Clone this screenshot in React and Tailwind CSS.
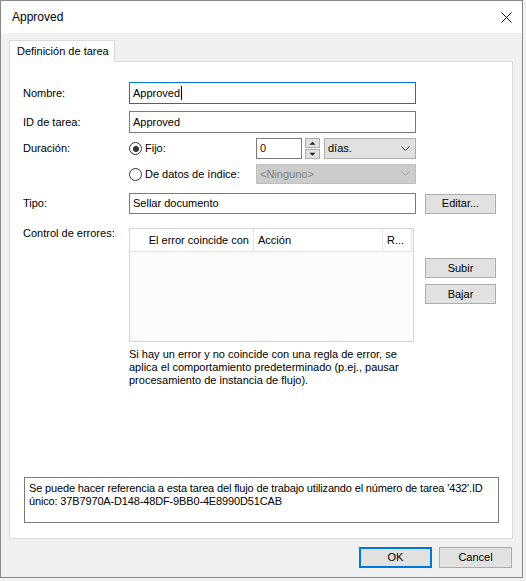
import React from 'react';

const font = { fontFamily: '"Liberation Sans", Arial, sans-serif' };

function Chevron({ color = '#404040' }) {
  return (
    <svg width="9" height="6" viewBox="0 0 9 6" className="shrink-0">
      <path d="M0.5 0.5 L4.5 4.5 L8.5 0.5" fill="none" stroke={color} strokeWidth="1" />
    </svg>
  );
}

function Radio({ checked }) {
  return (
    <span className="relative inline-block w-[13px] h-[13px] rounded-full border border-[#333] bg-white shrink-0">
      {checked && <span className="absolute left-[2.5px] top-[2.5px] w-[6px] h-[6px] rounded-full bg-[#333]" />}
    </span>
  );
}

function Spinner() {
  return (
    <div className="flex flex-col w-[15px] h-[21px] gap-[1px]">
      {['M4 6 L7.5 2.5 L11 6 Z', 'M4 2.5 L7.5 6 L11 2.5 Z'].map((d) => (
        <div key={d} className="flex-1 bg-[#e1e1e1] border border-[#adadad] flex items-center justify-center">
          <svg width="15" height="8" viewBox="0 0 15 8">
            <path d={d} fill="#222" />
          </svg>
        </div>
      ))}
    </div>
  );
}

function Button({ children, primary, className = '' }) {
  return (
    <div
      className={`flex items-center justify-center bg-[#e1e1e1] text-[11px] text-black ${
        primary ? 'border-2 border-[#0078d7]' : 'border border-[#adadad]'
      } ${className}`}
    >
      {children}
    </div>
  );
}

export default function App() {
  return (
    <div className="w-[526px] h-[581px] bg-[#f3f3f3]" style={font}>
      <div className="w-[523px] h-[578px] border border-[#888] bg-[#f0f0f0] flex flex-col text-[11px] text-black">
        {/* title bar */}
        <div className="h-[32px] bg-white flex items-center justify-between pl-[11px] pr-[10px]">
          <span className="text-[12px]">Approved</span>
          <svg width="11" height="11" viewBox="0 0 11 11">
            <path d="M0.5 0.5 L10.5 10.5 M10.5 0.5 L0.5 10.5" stroke="#111" strokeWidth="1" />
          </svg>
        </div>

        <div className="pl-[8px] pt-[7px]">
          {/* tab strip */}
          <div className="flex">
            <div className="relative z-10 h-[22px] w-[106px] -mb-[1px] bg-white border border-b-0 border-[#d9d9d9] flex items-center pl-[7px]">
              Definición de tarea
            </div>
          </div>

          {/* tab panel */}
          <div className="w-[504px] h-[478px] bg-white border border-[#d9d9d9] flex flex-col pl-[13px]">
            <div className="flex items-center mt-[20px] h-[22px]">
              <span className="w-[106px]">Nombre:</span>
              <div className="w-[287px] h-[22px] border border-[#0078d7] flex items-center pl-[3px]">
                Approved
                <span className="w-[1px] h-[14px] bg-black ml-[1px]" />
              </div>
            </div>

            <div className="flex items-center mt-[7px] h-[22px]">
              <span className="w-[106px]">ID de tarea:</span>
              <div className="w-[287px] h-[22px] border border-[#7a7a7a] flex items-center pl-[3px]">Approved</div>
            </div>

            <div className="flex items-center mt-[5px] h-[21px]">
              <span className="w-[106px]">Duración:</span>
              <label className="w-[127px] flex items-center gap-[3px]">
                <Radio checked />
                Fijo:
              </label>
              <div className="w-[46px] h-[21px] border border-[#7a7a7a] flex items-center pl-[3px] text-[#400]">0</div>
              <div className="ml-[3px]">
                <Spinner />
              </div>
              <div className="ml-[4px] w-[92px] h-[21px] bg-[#e1e1e1] border border-[#adadad] flex items-center justify-between pl-[3px] pr-[5px]">
                días.
                <Chevron />
              </div>
            </div>

            <div className="flex items-center mt-[5px] h-[20px]">
              <span className="w-[106px]" />
              <label className="w-[127px] flex items-center gap-[3px]">
                <Radio />
                De datos de índice:
              </label>
              <div className="w-[160px] h-[20px] bg-[#cccccc] border border-[#bfbfbf] flex items-center justify-between pl-[3px] pr-[5px] text-[#838383]">
                &lt;Ninguno&gt;
                <Chevron color="#a8a8a8" />
              </div>
            </div>

            <div className="flex items-center mt-[9px] h-[21px]">
              <span className="w-[106px]">Tipo:</span>
              <div className="w-[287px] h-[21px] border border-[#7a7a7a] flex items-center pl-[3px]">Sellar documento</div>
              <Button className="ml-[9px] w-[71px] h-[20px]">Editar...</Button>
            </div>

            <div className="flex mt-[14px]">
              <span className="w-[106px] -mt-[1px] leading-[13px]">Control de errores:</span>
              <div className="w-[285px] h-[114px] border border-[#d5d5d5] bg-[#fbfbfb] flex flex-col">
                <div className="flex h-[23px] bg-white border-b border-[#e5e5e5] w-[282px]">
                  <div className="w-[124px] border-r border-[#e5e5e5] flex items-center justify-end pr-[4px]">El error coincide con</div>
                  <div className="w-[129px] border-r border-[#e5e5e5] flex items-center pl-[4px]">Acción</div>
                  <div className="flex-1 border-r border-[#e5e5e5] flex items-center pl-[4px]">R...</div>
                </div>
              </div>
              <div className="ml-[11px] flex flex-col">
                <Button className="mt-[30px] w-[71px] h-[20px]">Subir</Button>
                <Button className="mt-[6px] w-[71px] h-[20px]">Bajar</Button>
              </div>
            </div>

            <p className="ml-[106px] mt-[6px] w-[290px] leading-[13px]">
              Si hay un error y no coincide con una regla de error, se aplica el comportamiento predeterminado (p.ej., pausar procesamiento de instancia de flujo).
            </p>

            <div className="flex-1" />

            <div className="ml-[1px] mb-[15px] w-[475px] h-[46px] border border-[#7a7a7a] px-[4px] pt-[4px] leading-[13px] whitespace-nowrap tracking-[-0.15px]">
              Se puede hacer referencia a esta tarea del flujo de trabajo utilizando el número de tarea '432'.ID
              <br />
              único: 37B7970A-D148-48DF-9BB0-4E8990D51CAB
            </div>
          </div>
        </div>

        <div className="flex justify-end gap-[7px] pr-[10px] mt-[8px]">
          <Button primary className="w-[73px] h-[21px]">OK</Button>
          <Button className="w-[73px] h-[21px]">Cancel</Button>
        </div>
      </div>
    </div>
  );
}
